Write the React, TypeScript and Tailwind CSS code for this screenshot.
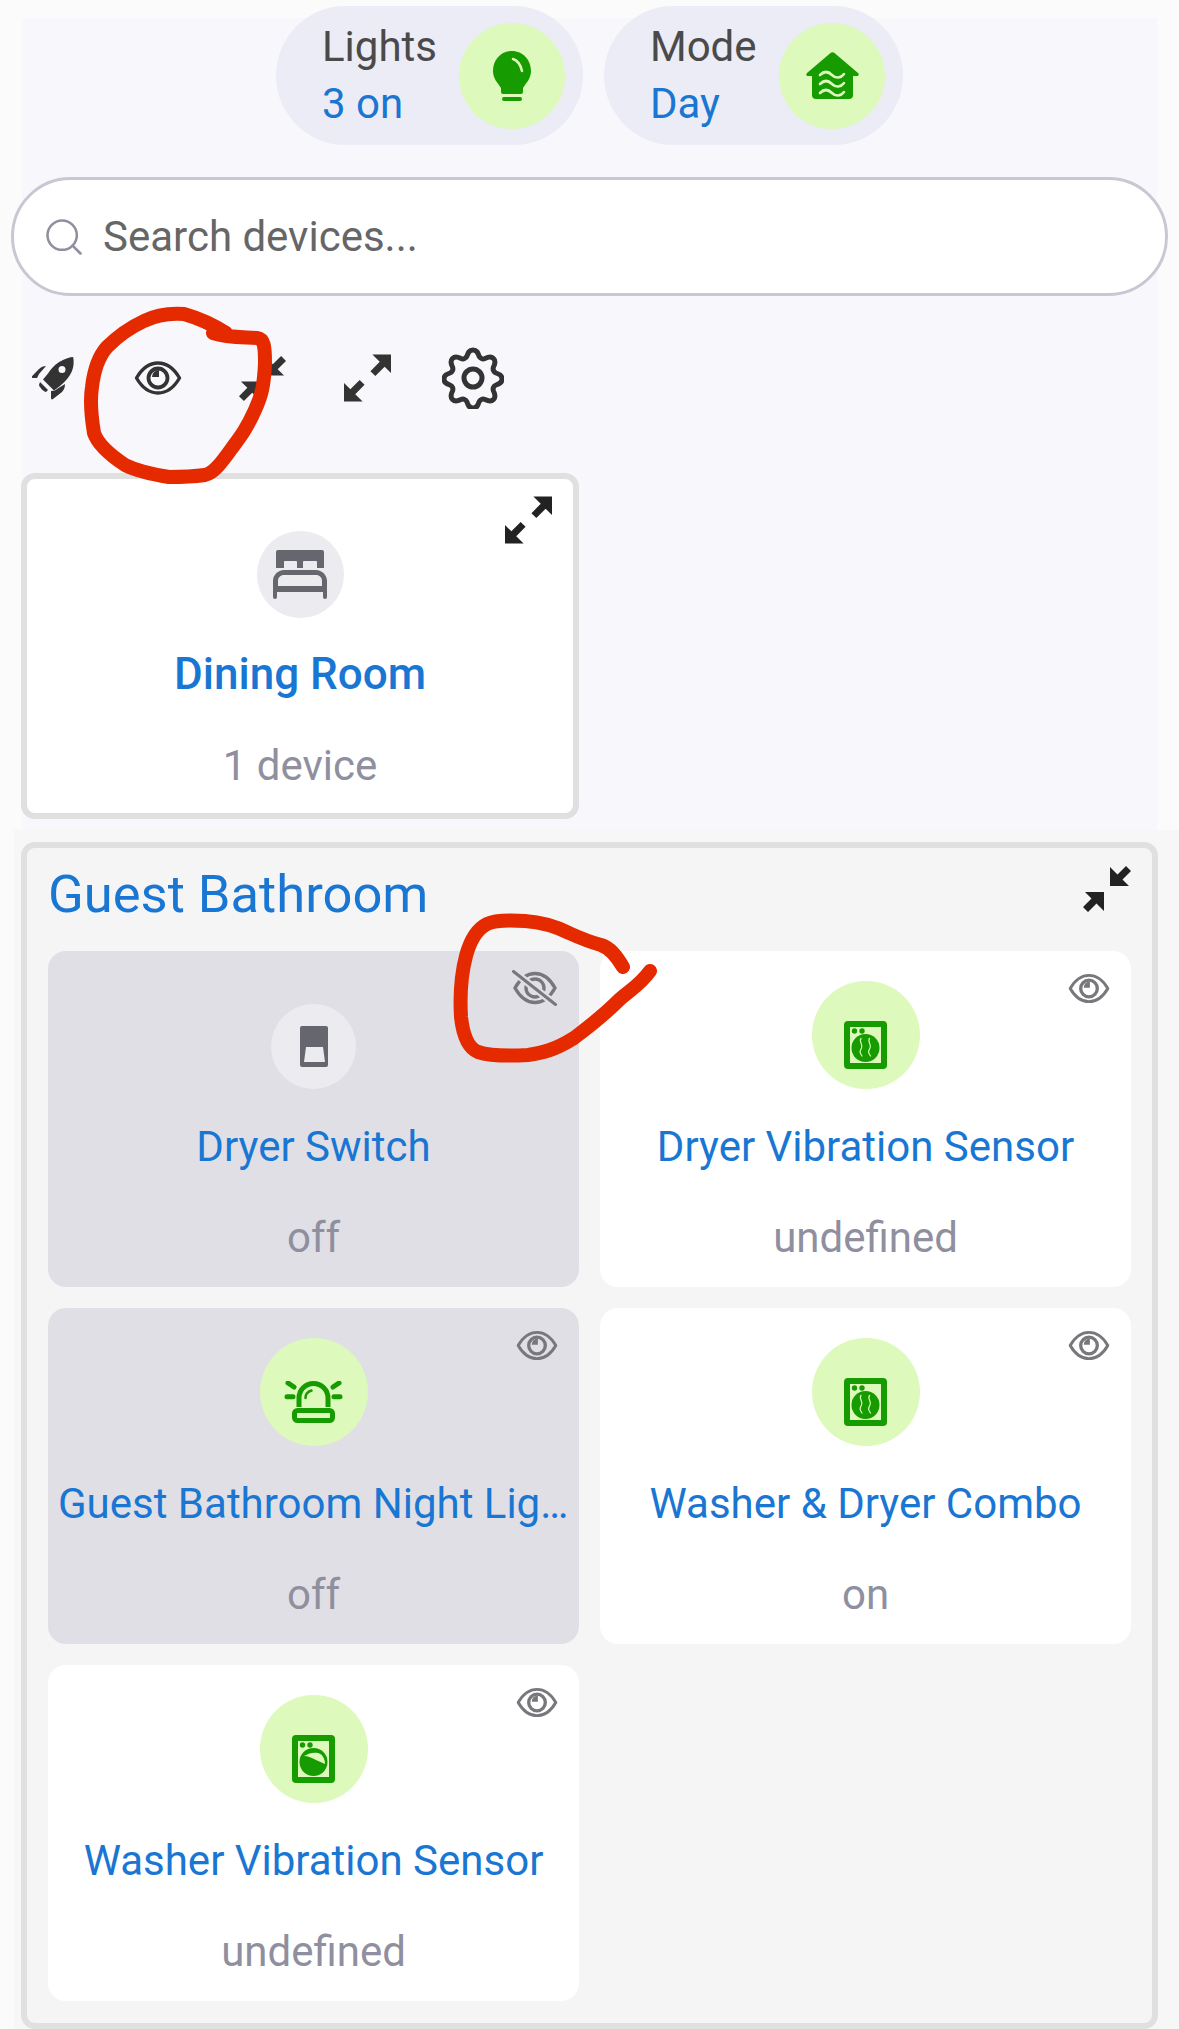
import React from 'react'
import { Search } from 'lucide-react'

const BLUE = 'text-[#1976d2]'
const GREEN = '#169c00'
const PALE = '#ddf9bb'

function Eye({ className }: { className: string }) {
  return (
    <svg viewBox="0 0 48 36" fill="none" stroke="currentColor" className={className}>
      <path d="M2.5 18C8 8.500 15 3 24 3s16 5.500 21.500 15C40 27.500 33 33 24 33S8 27.500 2.500 18Z" strokeWidth="3.400" strokeLinejoin="round" />
      <circle cx="24" cy="18" r="9.500" strokeWidth="3.800" />
      <path d="M24 17v-7a7 7 0 0 0-7 7Z" fill="currentColor" stroke="none" transform="translate(1 0)" />
    </svg>
  )
}

function EyeOff({ className }: { className: string }) {
  return (
    <svg viewBox="0 0 45 36" fill="none" stroke="currentColor" className={className}>
      <path d="M3 18C8 9 14 3.500 23 3.500S38 9 43 18C38 27 32 32.500 23 32.500S8 27 3 18Z" strokeWidth="3.400" />
      <circle cx="23" cy="18" r="9" strokeWidth="3.400" />
      <path d="M1 1l43 34" stroke="#e0dfe6" strokeWidth="7.500" />
      <path d="M1.500 1.500l42 33" strokeWidth="3" strokeLinecap="round" />
    </svg>
  )
}

function Expand({ className }: { className: string }) {
  return (
    <svg viewBox="0 0 48 48" fill="currentColor" className={className}>
      <path d="M29 0h19v19l-6.500-6.500-9.500 9.500-5-5 9.500-9.500Z" />
      <path d="M0 48V29l6.500 6.500 9.500-9.500 5 5-9.500 9.500L19 48Z" />
    </svg>
  )
}

function Compress({ className }: { className: string }) {
  return (
    <svg viewBox="0 0 48 48" fill="currentColor" className={className}>
      <path d="M27 2v19h19l-6.500-6.500L48 6l-5-5-8.500 8.500Z" />
      <path d="M21 46V27H2l6.500 6.500L0 42l5 5 8.500-8.500Z" />
    </svg>
  )
}

function Gear({ className }: { className: string }) {
  return (
    <svg viewBox="0 0 62 62" fill="none" stroke="currentColor" strokeWidth="5" className={className}>
      <circle cx="31" cy="31" r="9" />
      <path d="M31 3c4 0 5 3 6 6 1 2.500 3.500 3.500 6 2.500 3-1.500 6-2.500 8.500 0s1.500 5.500 0 8.500c-1 2.500 0 5 2.500 6 3 1 6 2 6 6s-3 5-6 6c-2.500 1-3.500 3.500-2.500 6 1.500 3 2.500 6 0 8.500s-5.500 1.500-8.500 0c-2.500-1-5 0-6 2.500-1 3-2 6-6 6s-5-3-6-6c-1-2.500-3.500-3.500-6-2.500-3 1.500-6 2.500-8.500 0s-1.500-5.500 0-8.500c1-2.500 0-5-2.500-6-3-1-6-2-6-6s3-5 6-6c2.500-1 3.500-3.500 2.500-6-1.500-3-2.500-6 0-8.500s5.500-1.500 8.500 0c2.500 1 5 0 6-2.500 1-3 2-6 6-6Z" strokeLinejoin="round" />
    </svg>
  )
}

function Rocket({ className }: { className: string }) {
  return (
    <svg viewBox="0 0 42 43" fill="currentColor" className={className}>
      <path fillRule="evenodd" d="M41 0c1 3 1 9-1 14-2 5-6 10-12 15l-6 4.500-11-11 5-6C20 10 26 5 31 3c3-1.500 7-3 10-3ZM30 9a3.500 3.500 0 1 0 0 7 3.500 3.500 0 0 0 0-7Z" />
      <path d="M14 9l-7 8-2 4H1c-1 0-1.500-1-.8-2L7 12c2-2 4.500-3 7-3Z" />
      <path d="M33 27c0 3-1 6-3 8l-9 7c-1 .800-2 .300-2-1v-7c3 0 5-1 6-2Z" />
      <path d="M8 25l8 8-2 2c-2 0-6-4-7-7Z" />
    </svg>
  )
}

function Bulb() {
  return (
    <svg viewBox="0 0 38 50" className="w-[38px] h-[50px]">
      <path fill={GREEN} d="M19 0c11 0 19 9 19 20 0 8-5 12-8 17v4a2 2 0 0 1-2 2H10a2 2 0 0 1-2-2v-4C5 32 0 28 0 20 0 9 8 0 19 0Z" />
      <rect x="9" y="46" width="20" height="4" rx="2" fill={GREEN} />
      <path d="M20 8c4 1 8 6 9 12" stroke={PALE} strokeWidth="2.500" strokeLinecap="round" fill="none" />
    </svg>
  )
}

function HomeWaves() {
  return (
    <svg viewBox="0 0 53 47" className="w-[53px] h-[47px]">
      <path fill={GREEN} d="M24.500 1c1-1 3-1 4 0l23.500 20c1.500 1.500.5 3-1 3h-4v19a4 4 0 0 1-4 4H10a4 4 0 0 1-4-4V24H2c-1.500 0-2.500-1.500-1-3Z" />
      <path d="M14 23c4-4 8-4 12 0s9 3 12-1M14 32c4-4 8-4 12 0s9 3 12-1M14 41c4-4 8-4 12 0s9 3 12-1" fill="none" stroke={PALE} strokeWidth="2.600" strokeLinecap="round" />
    </svg>
  )
}

function Bed() {
  return (
    <svg viewBox="0 0 54 49" fill="#66666e" className="w-[54px] h-[49px]">
      <path d="M5 0h44a2 2 0 0 1 2 2v16h-7v-6a1 1 0 0 0-1-1H31a1 1 0 0 0-1 1v6h-6v-6a1 1 0 0 0-1-1H12a1 1 0 0 0-1 1v6H3V2a2 2 0 0 1 2-2Z" />
      <path fillRule="evenodd" d="M11 20h32c6 0 11 5 11 11v16a2 2 0 0 1-4 0v-5H4v5a2 2 0 0 1-4 0V31c0-6 5-11 11-11Zm0 5c-3.500 0-6 2.500-6 6v5h44v-5c0-3.500-2.500-6-6-6Z" />
    </svg>
  )
}

function Washer({ kind }: { kind: 'dryer' | 'washer' }) {
  return (
    <svg viewBox="0 0 43 48" className="w-[43px] h-[48px]">
      <path fill={GREEN} fillRule="evenodd" d="M4 0h35a4 4 0 0 1 4 4v40a4 4 0 0 1-4 4H4a4 4 0 0 1-4-4V4a4 4 0 0 1 4-4Zm2 6v36h31V6Z" />
      <circle cx="10.500" cy="10" r="2.700" fill={GREEN} />
      <circle cx="18" cy="10" r="2.700" fill={GREEN} />
      <circle cx="21.500" cy="27" r="14" fill={GREEN} />
      {kind === 'dryer' ? (
        <path d="M17 17.500c-2.500 3 2.500 6 .5 9.500s-2 4.500 .5 8M25.500 17.500c-2.500 3 2.500 6 .5 9.500s-2 4.500 .5 8" stroke={PALE} strokeWidth="1.200" fill="none" strokeLinecap="round" />
      ) : (
        <path d="M12 21c5-3 10-4 14-3 4 1 7 5 7 11-3-1-6-3-9-4-4-2-8-4-12-4Z" fill={PALE} />
      )}
    </svg>
  )
}

function Siren() {
  return (
    <svg viewBox="0 0 61 42" fill="none" stroke={GREEN} strokeLinecap="round" className="w-[61px] h-[42px]">
      <path d="M16 26V17a14.500 14.500 0 0 1 29 0v9" strokeWidth="5" strokeLinecap="butt" />
      <path d="M22.500 17c0-3.500 2.500-6.500 6-7.500" strokeWidth="2.500" />
      <rect x="11.500" y="29.500" width="38" height="10" rx="3" strokeWidth="5" />
      <path d="M4 15.800h6M51 15.800h6M5 2l6 4M56 2l-6 4" strokeWidth="5" />
    </svg>
  )
}

function SwitchIcon() {
  return (
    <svg viewBox="0 0 28 41" className="w-[28px] h-[41px]">
      <path fill="#66666e" fillRule="evenodd" d="M2 0h24a2 2 0 0 1 2 2v37a2 2 0 0 1-2 2H2a2 2 0 0 1-2-2V2a2 2 0 0 1 2-2ZM6 21 4 36H25L23 21Z" />
    </svg>
  )
}

function Chip({ label, value, icon, className }: { label: string; value: string; icon: React.ReactNode; className: string }) {
  return (
    <div className={`flex items-center justify-between h-[139px] rounded-full bg-[#ebecf5] pl-[46px] pr-[18px] ${className}`}>
      <div className="flex flex-col gap-[1px]">
        <span className="text-[42px] leading-[56px] text-[#4a4a4a]">{label}</span>
        <span className={`text-[42px] leading-[56px] ${BLUE}`}>{value}</span>
      </div>
      <div className="flex items-center justify-center w-[106px] h-[106px] rounded-full bg-[#ddf9bb]">{icon}</div>
    </div>
  )
}

type Device = { name: string; status: string; icon: React.ReactNode; muted?: boolean; hidden?: boolean; gray?: boolean }

const devices: Device[] = [
  { name: 'Dryer Switch', status: 'off', icon: <SwitchIcon />, muted: true, hidden: true, gray: true },
  { name: 'Dryer Vibration Sensor', status: 'undefined', icon: <Washer kind="dryer" /> },
  { name: 'Guest Bathroom Night Light', status: 'off', icon: <Siren />, muted: true },
  { name: 'Washer & Dryer Combo', status: 'on', icon: <Washer kind="dryer" /> },
  { name: 'Washer Vibration Sensor', status: 'undefined', icon: <Washer kind="washer" /> },
]

function DeviceCard({ d }: { d: Device }) {
  return (
    <div className={`relative flex flex-col items-center h-[336px] rounded-[18px] px-[10px] pt-[30px] ${d.muted ? 'bg-[#e0dfe6]' : 'bg-white'}`}>
      <div className="flex items-end justify-center h-[108px]">
        {d.gray ? (
          <div className="flex items-center justify-center w-[85px] h-[85px] rounded-full bg-[#ebebf0]">{d.icon}</div>
        ) : (
          <div className="flex items-center justify-center w-[108px] h-[108px] pt-[20px] rounded-full bg-[#ddf9bb]">{d.icon}</div>
        )}
      </div>
      <div className={`mt-[29px] w-full text-center text-[42px] leading-[58px] truncate ${BLUE}`}>{d.name}</div>
      <div className="mt-[33px] text-[42px] leading-[58px] text-[#8f8f9f]">{d.status}</div>
      {d.hidden ? (
        <EyeOff className="absolute top-[19px] right-[22px] w-[45px] h-[36px] text-[#77777c]" />
      ) : (
        <Eye className="absolute top-[21px] right-[21px] w-[42px] h-[33px] text-[#77777c]" />
      )}
    </div>
  )
}

function Scribbles() {
  return (
    <svg width="1179" height="2029" viewBox="0 0 1179 2029" fill="none" className="absolute top-0 left-0 pointer-events-none">
      <path
        stroke="#e62a00"
        strokeWidth="14"
        strokeLinecap="round"
        strokeLinejoin="round"
        d="M213 333C228 338 245 337 257 338C264 339 265 346 265 363C264 385 262 395 255 410C247 428 241 436 232 448C222 462 214 473 205 475C190 477 178 477 169 477C150 474 135 470 125 465C110 455 98 445 94 433C91 415 90 400 92 387C94 370 98 357 107 347C119 335 131 327 144 321C156 315 170 313 184 314C198 318 212 324 226 333"
      />
      <path
        stroke="#e62a00"
        strokeWidth="14"
        strokeLinecap="round"
        strokeLinejoin="round"
        d="M623 967C616 955 610 948 601 945C590 942 580 938 569 933C555 926 540 922 525 921C510 920 495 920 487 924C477 929 470 941 466 956C461 975 460 1000 461 1017C463 1035 468 1048 478 1052C490 1056 510 1056 528 1055C542 1053 555 1050 574 1038C590 1026 605 1014 619 1000C630 990 640 985 650 971"
      />
    </svg>
  )
}

export default function App() {
  return (
    <div className="relative w-[1179px] h-[2029px] overflow-hidden bg-[#fbfbfb] font-['Roboto',sans-serif]">
      <div className="mx-[22px] mt-[18px] h-[812px] bg-[#f7f7fc]">
        <div className="flex justify-center gap-[21px] -translate-y-[12px]">
          <Chip className="w-[307px]" label="Lights" value="3 on" icon={<Bulb />} />
          <Chip className="w-[299px]" label="Mode" value="Day" icon={<HomeWaves />} />
        </div>
        <div className="flex items-center h-[119px] mt-[20px] -ml-[11px] -mr-[11px] rounded-full border-[3px] border-[#c8c8d4] bg-white pl-[28px]">
          <Search className="w-[44px] h-[44px] text-[#8f8f9f]" strokeWidth={1.4} />
          <input
            className="flex-1 ml-[17px] bg-transparent text-[42px] text-[#666666] placeholder:text-[#666666] outline-none"
            placeholder="Search devices..."
          />
        </div>
        <div className="flex items-center h-[164px] mb-[13px] -ml-[22px] text-[#333333]">
          <div className="flex justify-center w-[105px]"><Rocket className="w-[42px] h-[43px]" /></div>
          <div className="flex justify-center w-[105px]"><Eye className="w-[48px] h-[36px]" /></div>
          <div className="flex justify-center w-[105px]"><Compress className="w-[47px] h-[47px]" /></div>
          <div className="flex justify-center w-[105px]"><Expand className="w-[47px] h-[48px]" /></div>
          <div className="flex justify-center w-[105px]"><Gear className="w-[62px] h-[62px]" /></div>
        </div>
        <div className="relative flex flex-col items-center -ml-[1px] w-[558px] h-[346px] rounded-[14px] border-[6px] border-[#e0e0e0] bg-white pt-[52px]">
          <div className="flex items-center justify-center w-[87px] h-[87px] rounded-full bg-[#ebebf0]"><Bed /></div>
          <div className={`mt-[27px] text-[44px] leading-[58px] font-medium ${BLUE}`}>Dining Room</div>
          <div className="mt-[34px] text-[42px] leading-[58px] text-[#8f8f9f]">1 device</div>
          <Expand className="absolute top-[17px] right-[21px] w-[47px] h-[48px] text-[#222222]" />
        </div>
      </div>
      <div className="ml-[14px] pl-[7px] pr-[21px] pt-[12px] h-[1199px] bg-[#f7f7f7]">
        <div className="relative h-[1187px] rounded-[14px] border-[6px] border-[#e0e0e0] bg-[#f5f5f5] px-[21px]">
          <div className={`h-[103px] pt-[11px] text-[52.5px] leading-[70px] ${BLUE}`}>Guest Bathroom</div>
          <Compress className="absolute top-[17px] right-[21px] w-[48px] h-[48px] text-[#222222]" />
          <div className="grid grid-cols-2 gap-x-[21px] gap-y-[21px]">
            {devices.map((d) => (
              <DeviceCard key={d.name} d={d} />
            ))}
          </div>
        </div>
      </div>
      <Scribbles />
    </div>
  )
}
